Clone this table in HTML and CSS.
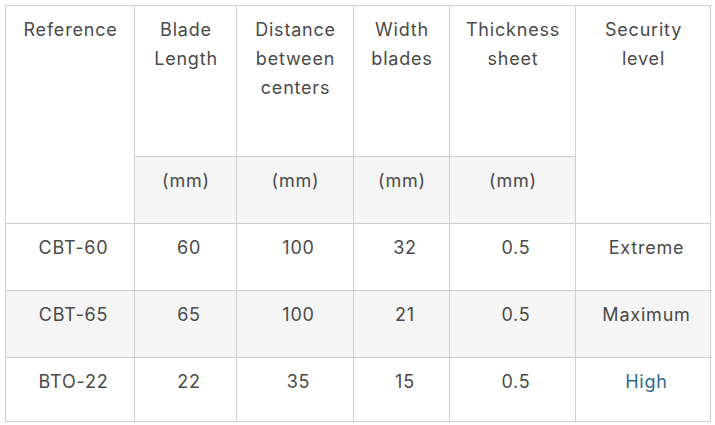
FILE: index.html
```html
<!DOCTYPE html>
<html>
<head>
<meta charset="utf-8">
<link rel="stylesheet" href="styles.css">
</head>
<body>
<table class="spec">
  <colgroup>
    <col class="c1"><col class="c2"><col class="c3"><col class="c4"><col class="c5"><col class="c6">
  </colgroup>
  <thead>
    <tr class="head-main">
      <th rowspan="2">Reference</th>
      <th>Blade<br>Length</th>
      <th>Distance<br>between<br>centers</th>
      <th>Width<br>blades</th>
      <th>Thickness<br>sheet</th>
      <th rowspan="2">Security<br>level</th>
    </tr>
    <tr class="head-unit">
      <th class="unit">(mm)</th>
      <th class="unit">(mm)</th>
      <th class="unit">(mm)</th>
      <th class="unit">(mm)</th>
    </tr>
  </thead>
  <tbody>
    <tr class="row">
      <td>CBT-60</td><td>60</td><td>100</td><td>32</td><td>0.5</td><td>Extreme</td>
    </tr>
    <tr class="row alt">
      <td>CBT-65</td><td>65</td><td>100</td><td>21</td><td>0.5</td><td>Maximum</td>
    </tr>
    <tr class="row last">
      <td>BTO-22</td><td>22</td><td>35</td><td>15</td><td>0.5</td><td class="link">High</td>
    </tr>
  </tbody>
</table>
</body>
</html>
```
FILE: styles.css
```css
html, body {
  margin: 0;
  padding: 0;
  background: #ffffff;
}
body {
  padding: 5px 0 0 5px;
}
.spec {
  border-collapse: collapse;
  table-layout: fixed;
  width: 705px;
  font-family: Inter, "Open Sans", "Liberation Sans", sans-serif;
  font-size: 18px;
  letter-spacing: 0.8px;
  line-height: 29px;
  color: #4a4a4a;
}
.c1 { width: 129px; }
.c2 { width: 102px; }
.c3 { width: 117px; }
.c4 { width: 96px; }
.c5 { width: 126px; }
.c6 { width: 135px; }
.spec th, .spec td {
  border: 1px solid #cfcfcf;
  text-align: center;
  vertical-align: top;
  font-weight: 400;
  padding: 9px 2px 0 3px;
  box-sizing: border-box;
}
.spec td {
  padding-left: 9px;
  padding-right: 2px;
}
.head-main { height: 151px; }
.head-unit { height: 67px; }
.row { height: 67px; }
.row.last { height: 64px; }
.unit, .alt td {
  background: #f5f5f5;
}
.link {
  color: #2f6a91;
}
```
